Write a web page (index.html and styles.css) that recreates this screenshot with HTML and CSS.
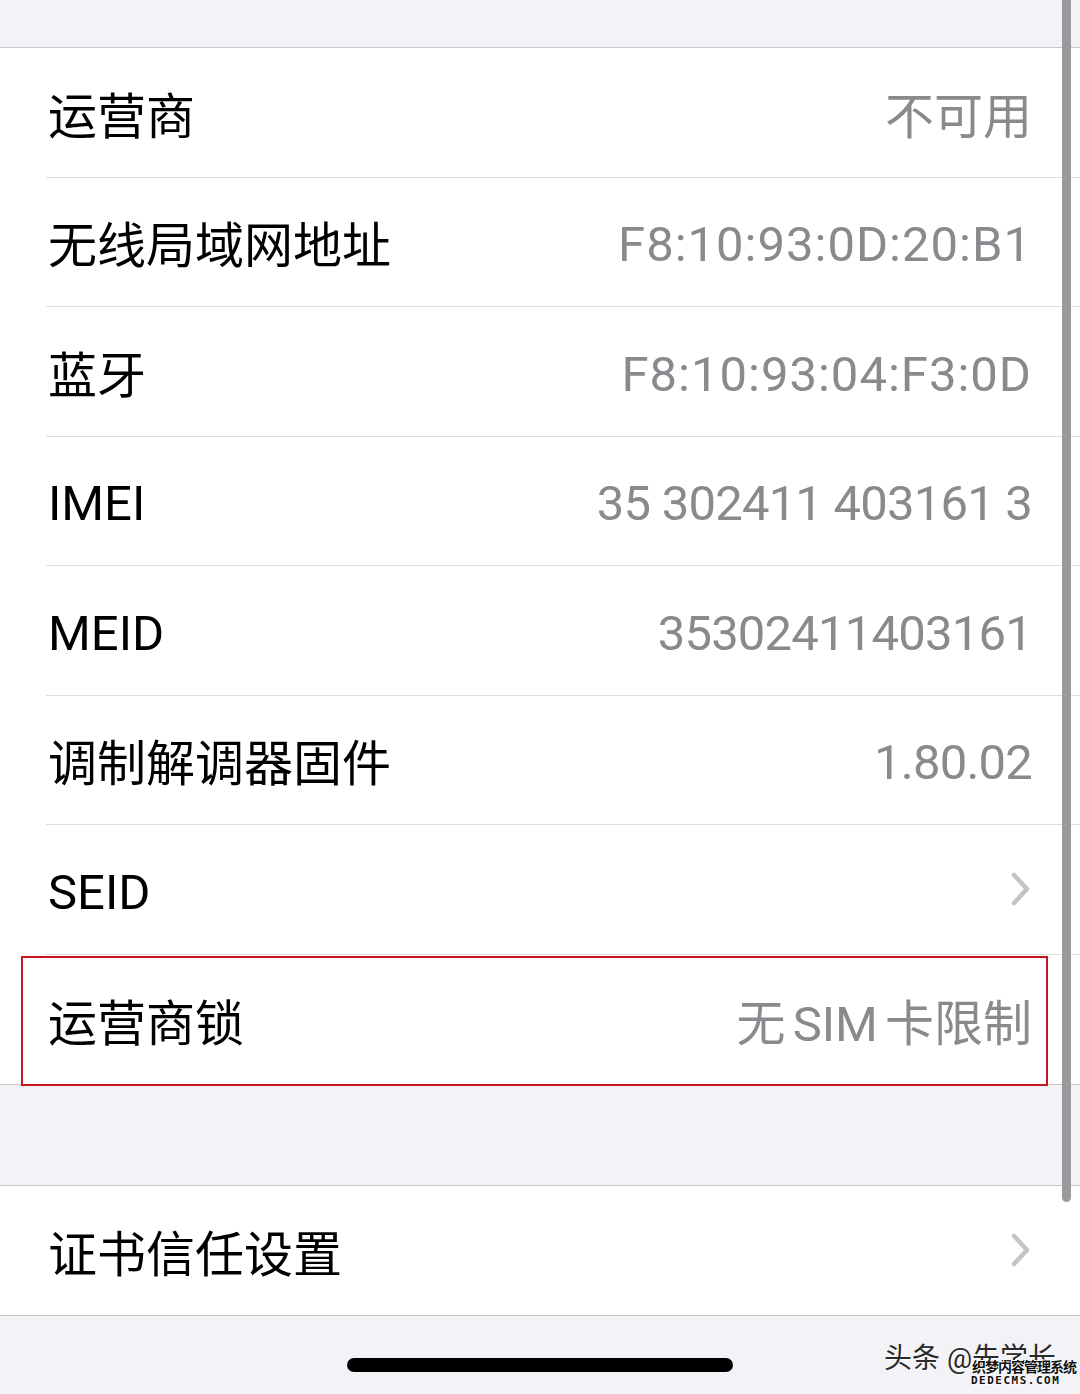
FILE: index.html
```html
<!DOCTYPE html>
<html lang="zh-CN">
<head>
    <meta charset="UTF-8">
    <meta name="viewport" content="width=device-width, initial-scale=1.0">
    <title>关于本机</title>
    <link rel="stylesheet" href="styles.css">
</head>
<body>
    <div class="screen">
        <div class="top-gap"></div>
        <div class="group">
            <div class="row"><span class="label">运营商</span><span class="value">不可用</span></div>
            <div class="row"><span class="label">无线局域网地址</span><span class="value num mac">F8:10:93:0D:20:B1</span></div>
            <div class="row"><span class="label">蓝牙</span><span class="value num mac">F8:10:93:04:F3:0D</span></div>
            <div class="row"><span class="label latin">IMEI</span><span class="value num">35 302411 403161 3</span></div>
            <div class="row"><span class="label latin">MEID</span><span class="value num">35302411403161</span></div>
            <div class="row"><span class="label">调制解调器固件</span><span class="value num">1.80.02</span></div>
            <div class="row">
                <span class="label latin">SEID</span>
                <svg class="chevron" width="22" height="36" viewBox="0 0 22 36"><path d="M4 4 L17 18 L4 32" fill="none" stroke="#c4c4c7" stroke-width="4.5" stroke-linecap="round" stroke-linejoin="round"/></svg>
            </div>
            <div class="row"><span class="label">运营商锁</span><span class="value mixed">无 SIM 卡限制</span></div>
        </div>
        <div class="mid-gap"></div>
        <div class="group">
            <div class="row single">
                <span class="label">证书信任设置</span>
                <svg class="chevron" width="22" height="36" viewBox="0 0 22 36"><path d="M4 4 L17 18 L4 32" fill="none" stroke="#c4c4c7" stroke-width="4.5" stroke-linecap="round" stroke-linejoin="round"/></svg>
            </div>
        </div>
        <div class="bottom">
            <div class="home-bar"></div>
        </div>

        <div class="scrollbar"></div>
        <div class="highlight"></div>
        <div class="watermark">
            <span class="wm-main">头条 @先学长</span>
            <span class="wm-cn">织梦内容管理系统</span>
            <span class="wm-en">DEDECMS.COM</span>
        </div>
    </div>
</body>
</html>
```

FILE: styles.css
```css
html,body{
    margin:0px;
    padding:0px;
}
body{
    background-color:#f2f2f7;
    font-family:"Roboto","Noto Sans CJK SC",sans-serif;
}
.screen{
    position:relative;
    width:1080px;
    height:1394px;
    overflow:hidden;
    background-color:#f2f2f7;
}
.top-gap{
    height:47px;
    border-bottom:1px solid #c6c6c9;
}
.group{
    background-color:#fff;
    border-bottom:1px solid #c6c6c9;
}
.row{
    box-sizing:border-box;
    height:129.5px;
    margin-left:46px;
    padding:0 48px 0 2px;
    display:flex;
    align-items:center;
    justify-content:space-between;
    border-bottom:1px solid #dcdcdf;
}
.group>.row:last-child{
    border-bottom:none;
    height:129px;
}
.row.single{
    height:128px;
}
.label{
    font-size:49px;
    color:#000;
}
.label.latin{
    padding-top:6px;
}
.value{
    font-size:49px;
    color:#8a8a8e;
}
.value.num{
    letter-spacing:-0.8px;
    padding-top:6px;
}
.value.mac{
    letter-spacing:1px;
}
.value.mixed{
    word-spacing:-5px;
}
.mid-gap{
    height:100px;
    border-bottom:1px solid #c6c6c9;
}
.bottom{
    display:flex;
    justify-content:center;
    padding-top:42px;
}
.home-bar{
    width:386px;
    height:14px;
    border-radius:7px;
    background-color:#000;
}
.scrollbar{
    position:absolute;
    top:0px;
    left:1062px;
    width:9px;
    height:1202px;
    border-radius:0 0 5px 5px;
    background-color:#9a9a9c;
}
.highlight{
    position:absolute;
    left:21px;
    top:956px;
    width:1023px;
    height:126px;
    border:2px solid #c8141e;
}
.watermark{
    position:absolute;
    left:884px;
    top:1336px;
    width:196px;
    height:58px;
}
.wm-main{
    position:absolute;
    left:0px;
    top:0px;
    font-size:28px;
    color:#2a2a2a;
    white-space:nowrap;
    text-shadow:1px 1px 0 #fff;
}
.wm-cn{
    position:absolute;
    left:88px;
    top:20px;
    font-size:14px;
    font-weight:bold;
    color:#111;
    white-space:nowrap;
    letter-spacing:-1px;
    text-shadow:1px 1px 0 #fff,-1px -1px 0 #fff;
}
.wm-en{
    position:absolute;
    left:87px;
    top:38px;
    font-family:"DejaVu Sans Mono",monospace;
    font-size:11px;
    font-weight:bold;
    color:#111;
    letter-spacing:1.5px;
    white-space:nowrap;
    text-shadow:1px 1px 0 #fff;
}
```
